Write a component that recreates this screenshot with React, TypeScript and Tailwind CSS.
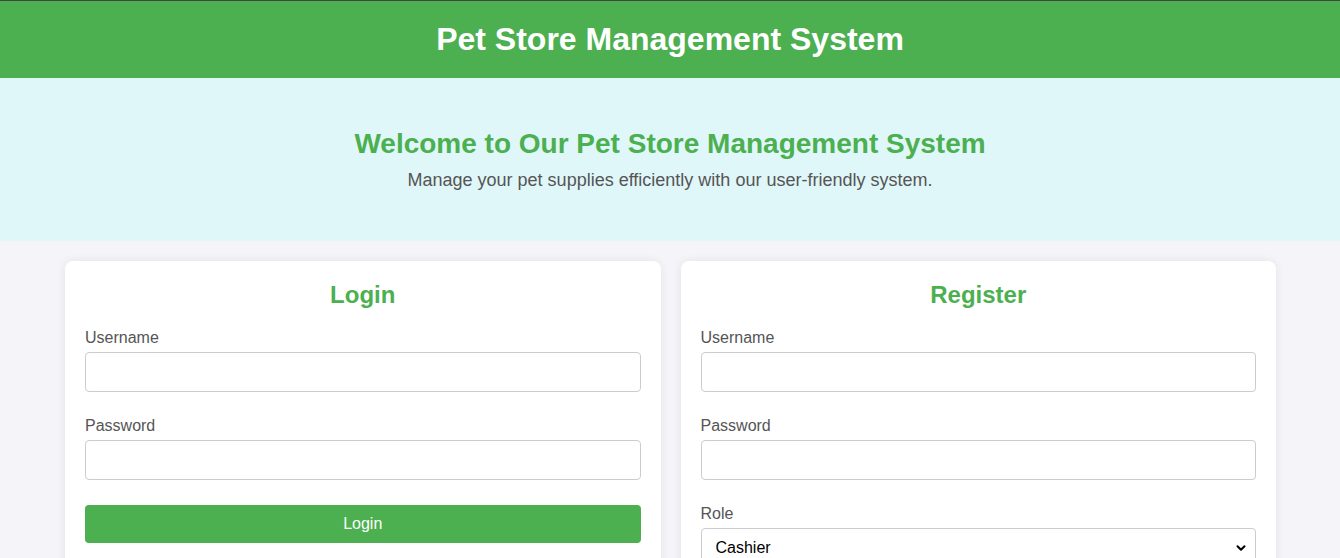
import { ChevronDown } from "lucide-react";

const Field = ({ label, type = "text" }: { label: string; type?: string }) => (
  <div className="mb-[25px]">
    <label className="block text-[16px] leading-[18px] text-[#555] mb-[5px]">{label}</label>
    <input
      type={type}
      className="block w-full h-[40px] px-[10px] border border-[#ccc] rounded-[4px] bg-white text-[16px] outline-none"
    />
  </div>
);

const App = () => {
  return (
    <div
      className="min-h-[558px] bg-[#f4f4f9] overflow-hidden"
      style={{ fontFamily: '"Liberation Sans", Arial, sans-serif' }}
    >
      {/* Header */}
      <header className="bg-[#4caf50] border-t border-[#444] h-[78px] flex items-center justify-center">
        <h1 className="text-white font-bold text-[32px] leading-[37px] mb-[1px]">
          Pet Store Management System
        </h1>
      </header>

      {/* Hero */}
      <section className="bg-[#e0f7fa] h-[163px] flex flex-col items-center pt-[50px]">
        <h2 className="text-[#4caf50] font-bold text-[28px] leading-[32px]">
          Welcome to Our Pet Store Management System
        </h2>
        <p className="text-[#555] text-[18px] leading-[21px] mt-[10px]">
          Manage your pet supplies efficiently with our user-friendly system.
        </p>
      </section>

      {/* Forms */}
      <div className="grid grid-cols-2 gap-[20px] pl-[65px] pr-[64px] mt-[20px]">
        <div className="bg-white rounded-[8px] shadow-[0_0_10px_rgba(0,0,0,0.08)] p-[20px]">
          <h2 className="text-center text-[#4caf50] font-bold text-[24px] leading-[28px] mb-[20px]">Login</h2>
          <Field label="Username" />
          <Field label="Password" type="password" />
          <button className="w-full h-[38px] bg-[#4caf50] text-white text-[16px] rounded-[4px]">
            Login
          </button>
        </div>

        <div className="bg-white rounded-[8px] shadow-[0_0_10px_rgba(0,0,0,0.08)] p-[20px]">
          <h2 className="text-center text-[#4caf50] font-bold text-[24px] leading-[28px] mb-[20px]">Register</h2>
          <Field label="Username" />
          <Field label="Password" type="password" />
          <div className="mb-[24px]">
            <label className="block text-[16px] leading-[18px] text-[#555] mb-[5px]">Role</label>
            <div className="relative">
              <select className="block w-full h-[40px] pl-[14px] pr-[30px] border border-[#ccc] rounded-[4px] bg-white text-[16px] text-black appearance-none outline-none">
                <option>Cashier</option>
                <option>Manager</option>
              </select>
              <ChevronDown
                className="absolute right-[8px] top-[13px] w-[14px] h-[14px] text-black pointer-events-none"
                strokeWidth={3.5}
              />
            </div>
          </div>
        </div>
      </div>
    </div>
  );
};

export default App;
